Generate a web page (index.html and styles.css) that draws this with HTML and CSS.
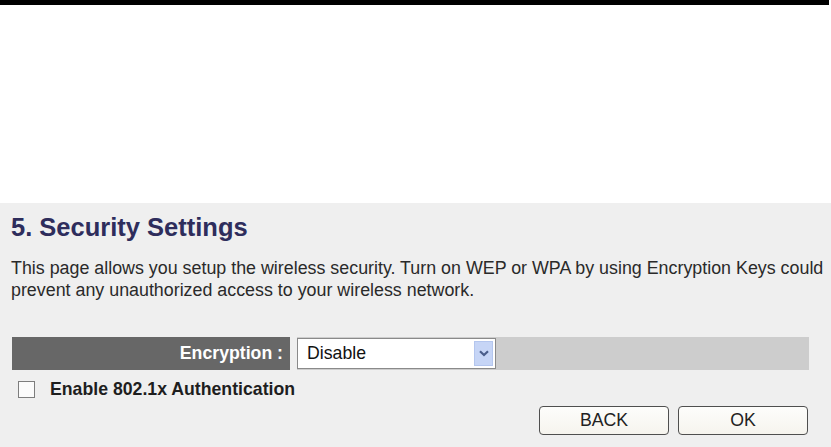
FILE: index.html
```html
<!DOCTYPE html>
<html>
<head>
<meta charset="utf-8">
<link rel="stylesheet" href="styles.css">
</head>
<body>
<div class="topbar"></div>
<div class="blank"></div>
<div class="panel">
  <div class="content">
    <h1 class="title">5. Security Settings</h1>
    <p class="intro">This page allows you setup the wireless security. Turn on WEP or WPA by using Encryption Keys could prevent any unauthorized access to your wireless network.</p>
    <div class="enc-row">
      <div class="enc-label">Encryption :</div>
      <div class="enc-field">
        <div class="select">
          <span class="select-text">Disable</span>
          <span class="select-btn">
            <svg width="10" height="7" viewBox="0 0 10 7"><path d="M1 1.2 L5 5 L9 1.2" fill="none" stroke="#4a5d8a" stroke-width="2.2"/></svg>
          </span>
        </div>
      </div>
    </div>
    <div class="check-row">
      <span class="checkbox"></span>
      <span class="check-label">Enable 802.1x Authentication</span>
    </div>
    <div class="buttons">
      <button class="btn">BACK</button>
      <button class="btn">OK</button>
    </div>
  </div>
</div>
</body>
</html>
```

FILE: styles.css
```css
html, body {
  margin: 0;
  padding: 0;
  background: #ffffff;
  font-family: "Liberation Sans", Arial, sans-serif;
}
.topbar {
  width: 829px;
  height: 5px;
  background: #000;
}
.blank {
  height: 198px;
  background: #fff;
}
.panel {
  background: #efefef;
  height: 244px;
  padding: 9px 0 0 11px;
  box-sizing: border-box;
}
.content {
  width: 798px;
}
.title {
  margin: 0;
  font-size: 25.5px;
  line-height: 30px;
  font-weight: bold;
  color: #2e2d5c;
}
.intro {
  margin: 15px 0 0 0;
  font-size: 17.85px;
  line-height: 22px;
  color: #2a2a2a;
  width: 820px;
}
.enc-row {
  margin: 36px 0 0 1px;
  display: flex;
  gap: 7px;
  height: 33px;
}
.enc-label {
  width: 278px;
  background: #676767;
  color: #fff;
  font-weight: bold;
  font-size: 17.7px;
  padding-right: 7px;
  box-sizing: border-box;
  display: flex;
  align-items: center;
  justify-content: flex-end;
}
.enc-field {
  width: 512px;
  background: #cdcdcd;
}
.select {
  margin-top: 1px;
  width: 199px;
  height: 31px;
  box-sizing: border-box;
  background: #fff;
  border: 1px solid #8a8a8a;
  display: flex;
  align-items: center;
  justify-content: space-between;
  padding: 0 2px 0 9px;
}
.select-text {
  font-size: 17.7px;
  color: #111;
}
.select-btn {
  width: 19px;
  height: 25px;
  background: #c6d5f6;
  border: 1px solid #b4c6ee;
  box-sizing: border-box;
  display: flex;
  align-items: center;
  justify-content: center;
}
.check-row {
  margin: 10px 0 0 7px;
  display: flex;
  align-items: center;
  height: 18px;
}
.checkbox {
  width: 17px;
  height: 17px;
  box-sizing: border-box;
  border: 1px solid #7d7d7d;
  background: #fbfbfb;
}
.check-label {
  margin-left: 15px;
  font-size: 17.7px;
  font-weight: bold;
  color: #1e1e1e;
}
.buttons {
  margin-top: 8px;
  display: flex;
  justify-content: flex-end;
  gap: 9px;
  padding-right: 1px;
}
.btn {
  width: 130px;
  height: 29px;
  border: 1.5px solid #4f4f4f;
  border-radius: 4px;
  background: linear-gradient(#fdfdfb, #f6f4ee);
  font-family: "Liberation Sans", Arial, sans-serif;
  font-size: 17.7px;
  color: #222;
  padding: 0;
}
```
